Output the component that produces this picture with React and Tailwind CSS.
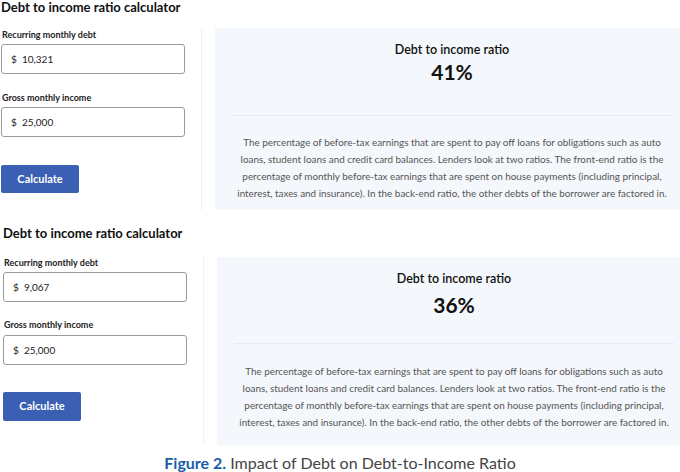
const DESC = [
  "The percentage of before-tax earnings that are spent to pay off loans for obligations such as auto",
  "loans, student loans and credit card balances. Lenders look at two ratios. The front-end ratio is the",
  "percentage of monthly before-tax earnings that are spent on house payments (including principal,",
  "interest, taxes and insurance). In the back-end ratio, the other debts of the borrower are factored in.",
];

function Field({ label, value, labelTop, inputTop }) {
  return (
    <>
      <div className={`${labelTop} text-[9px] leading-[10px] font-bold text-[#222]`}>{label}</div>
      <div className={`${inputTop} h-[30px] border border-[#9a9a9a] rounded-[3px] flex items-center pl-[9px] text-[10px] text-[#222]`}>
        $&nbsp;&nbsp;{value}
      </div>
    </>
  );
}

function Calculator({ debt, ratio, s }) {
  return (
    <section className={s.wrap}>
      <h2 className="text-[13px] leading-[15px] font-bold text-[#111]">Debt to income ratio calculator</h2>
      <div className={`flex ${s.rowTop}`}>
        <div className="w-[184px] shrink-0">
          <Field label="Recurring monthly debt" value={debt} labelTop={s.l1} inputTop="mt-[4px]" />
          <Field label="Gross monthly income" value="25,000" labelTop={s.l2} inputTop={s.i2} />
          <button className={`${s.btn} w-[78px] bg-[#3b60b3] rounded-[2px] text-white text-[11px] font-bold`}>
            Calculate
          </button>
        </div>
        <div className="w-px bg-[#eef0f3] ml-[16px] mr-[13px] shrink-0" />
        <div className={`w-[474px] shrink-0 bg-[#f4f7fb] px-[17px] ${s.panel} text-center`}>
          <div className="text-[12.5px] leading-[12px] font-semibold text-[#111]">Debt to income ratio</div>
          <div className={`${s.pct} text-[21px] leading-[20px] font-bold text-[#111]`}>{ratio}</div>
          <div className={`${s.hr} h-px bg-[#e6ebf1]`} />
          <div className={`${s.para} text-[9.9px] leading-[17px] text-[#555]`}>
            {DESC.map((line) => (
              <div key={line} className="whitespace-nowrap">{line}</div>
            ))}
          </div>
        </div>
      </div>
    </section>
  );
}

export default function App() {
  return (
    <div className="w-[680px] h-[472px] overflow-hidden bg-white font-['Lato',sans-serif]">
      <Calculator
        debt="10,321"
        ratio="41%"
        s={{
          wrap: "pl-[1px] pt-0",
          rowTop: "mt-[13px]",
          l1: "mt-[2px] pl-[1px]",
          l2: "mt-[19px] pl-[1px]",
          i2: "mt-[4px]",
          btn: "mt-[28px] h-[28px]",
          panel: "pt-[16px] pb-[8px]",
          pct: "mt-[6px]",
          hr: "mt-[33px]",
          para: "mt-[18px]",
        }}
      />
      <Calculator
        debt="9,067"
        ratio="36%"
        s={{
          wrap: "pl-[3px] mt-[16px]",
          rowTop: "mt-[16px]",
          l1: "mt-[1px] pl-[1px]",
          l2: "mt-[18px] pl-[1px]",
          i2: "mt-[5px]",
          btn: "mt-[27px] h-[29px]",
          panel: "pt-[16px] pb-[14px]",
          pct: "mt-[10px]",
          hr: "mt-[28px]",
          para: "mt-[19px]",
        }}
      />
      <p className="mt-[9px] text-center text-[16px] leading-[18px] text-[#444]">
        <span className="font-bold text-[#1b5ea8]">Figure 2.</span> Impact of Debt on Debt-to-Income Ratio
      </p>
    </div>
  );
}
